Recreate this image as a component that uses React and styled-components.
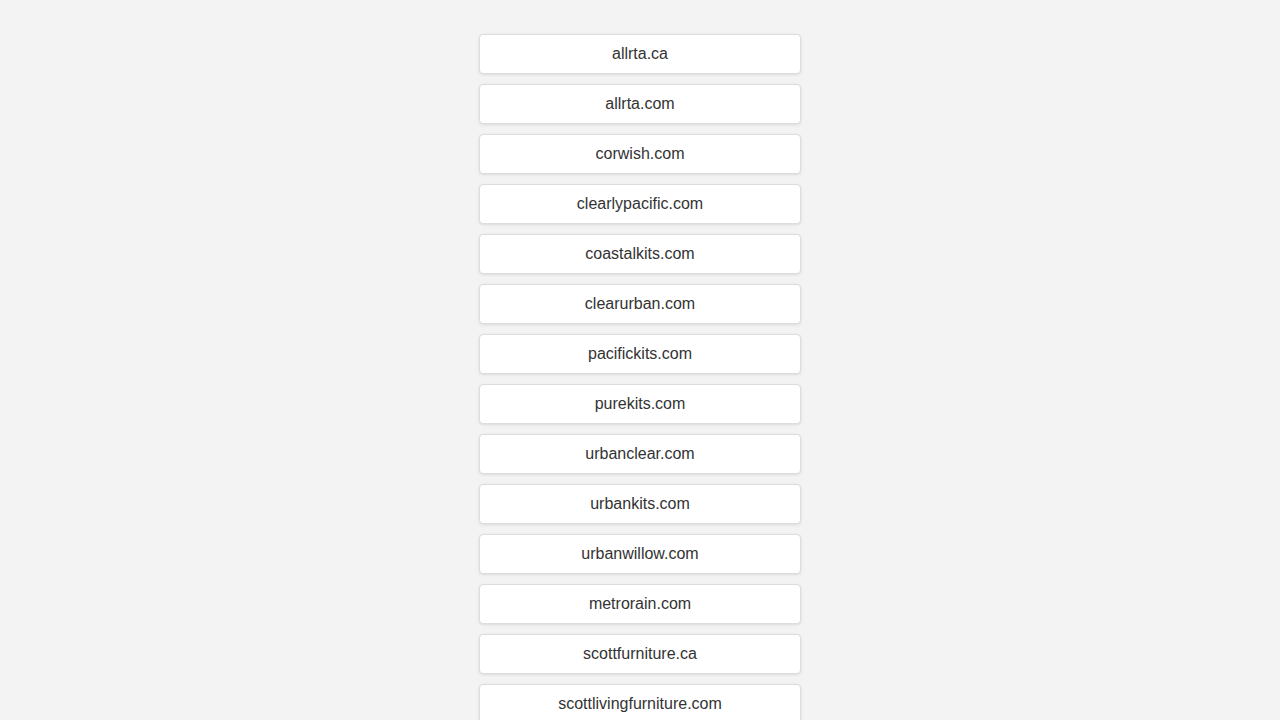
import React from "react";
import styled, { createGlobalStyle } from "styled-components";

const domains = [
  "allrta.ca",
  "allrta.com",
  "corwish.com",
  "clearlypacific.com",
  "coastalkits.com",
  "clearurban.com",
  "pacifickits.com",
  "purekits.com",
  "urbanclear.com",
  "urbankits.com",
  "urbanwillow.com",
  "metrorain.com",
  "scottfurniture.ca",
  "scottlivingfurniture.com",
];

const GlobalStyle = createGlobalStyle`
  body {
    margin: 0;
    background: #f3f3f3;
    font-family: "Liberation Sans", Arial, sans-serif;
    color: #333;
  }
`;

const List = styled.div`
  display: flex;
  flex-direction: column;
  align-items: center;
  gap: 10px;
  padding: 34px 0 40px;
`;

const DomainLink = styled.a`
  display: flex;
  align-items: center;
  justify-content: center;
  box-sizing: border-box;
  width: 322px;
  height: 40px;
  background: #fff;
  border: 1px solid #dcdcdc;
  border-radius: 4px;
  box-shadow: 0 1px 3px rgba(0, 0, 0, 0.1);
  font-size: 16px;
  color: #333;
  text-decoration: none;
`;

const App = () => {
  return (
    <>
      <GlobalStyle />
      <List>
        {domains.map((d) => (
          <DomainLink key={d} href="#">
            {d}
          </DomainLink>
        ))}
      </List>
    </>
  );
};

export default App;
